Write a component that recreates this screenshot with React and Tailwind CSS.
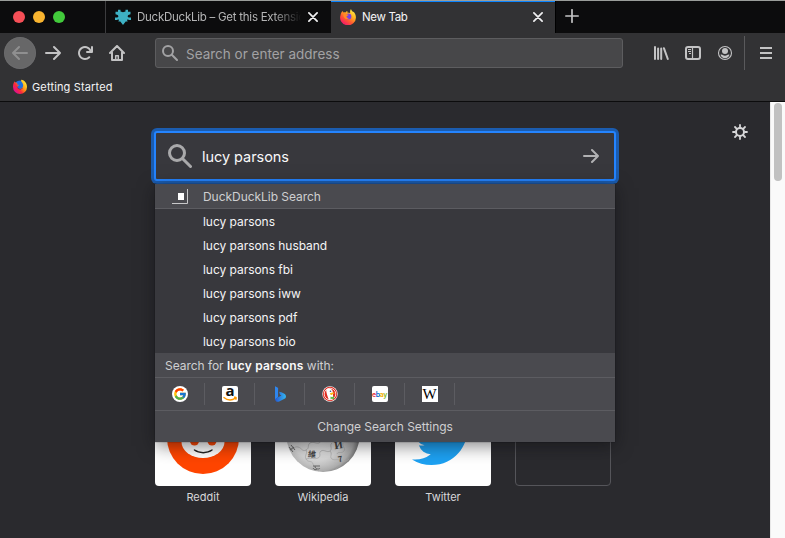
import React from "react";
import { FcGoogle } from "react-icons/fc";

const suggestions = [
  "lucy parsons",
  "lucy parsons husband",
  "lucy parsons fbi",
  "lucy parsons iww",
  "lucy parsons pdf",
  "lucy parsons bio",
];

function Firefox({ id, className }) {
  return (
    <svg viewBox="0 0 16 16" className={className}>
      <defs>
        <linearGradient id={id} x1="0.85" y1="0.05" x2="0.2" y2="0.95">
          <stop offset="0" stopColor="#fff04a" />
          <stop offset="0.35" stopColor="#ffb01f" />
          <stop offset="0.65" stopColor="#ff5a30" />
          <stop offset="1" stopColor="#f5156c" />
        </linearGradient>
      </defs>
      <path
        fill={`url(#${id})`}
        d="M1.5 3.2c.4-.3.7-.9.8-1.3.6.4 1 1 1.2 1.5.7-.2 1.3-.2 1.9 0C6 2.700 6.800 2 7.500 2c-.3.6-.3 1 .1 1.500 1.200.2 2 .4 2.600.6C9.900 2.500 10 1 11 0c.3 1.500 1.400 2.200 2.300 3.200.1-.2.1-.5 0-.8C15 4 15.900 6.200 15.900 8.300A7.900 7.700 0 1 1 .5 6.200c.100-1.100.4-2.200 1-3z"
      />
      <circle cx="8.500" cy="7.400" r="2.900" fill="#7543e3" />
      <path d="M3.300 4.500c1.400-.6 2.700-.1 3.300.8.600.3 1.500.2 2 .5-.4.900-1.600 1-2 1.500-.2 1.300.9 1.900 2.300 1.400-1 1.900-4 1.800-4.900-.4C3.200 7.600 3.600 6 3.300 4.500z" fill="#ff8a27" />
    </svg>
  );
}

function FirefoxClassic({ className }) {
  return (
    <svg viewBox="0 0 16 16" className={className}>
      <defs>
        <linearGradient id="classic" x1="0.9" y1="0.1" x2="0.1" y2="0.75">
          <stop offset="0" stopColor="#fff13d" />
          <stop offset="0.4" stopColor="#ff9a16" />
          <stop offset="0.7" stopColor="#fb2b3a" />
          <stop offset="1" stopColor="#e0108d" />
        </linearGradient>
      </defs>
      <circle cx="8" cy="7.500" r="6" fill="#1d6fe0" />
      <path fill="url(#classic)" d="M1.700 4c.3-.8.6-1.300 1.100-1.700 0 .5.100.9.400 1.200.8-.2 1.600 0 2.200.4-.5.600-.5 1.200-.1 1.700l1.700.5c-.2.800-1.200 1-1.500 1.500-.2 2.400 4.600 3 5.500 0 .5-1.800-.1-3.200-1.300-4.600C9.100 2.300 8.900 1.500 9.300.7c3.400.4 5.700 3.600 5.700 7.200a7 7.200 0 1 1-14 0C.9 6.300 1.200 5.100 1.700 4z" />
      <path d="M4.700 7c1 3.200 4.600 3.800 6.300 1.600-.4 2-5 3.600-6.300-1.600z" fill="#26268c" />
    </svg>
  );
}

function LibraryLogo() {
  return (
    <svg viewBox="0 0 16 16" className="size-4 shrink-0" fill="#3eb1c4">
      <path d="M3 .8h2.500v1.700L8 3.300l2.500-.8V.8H13v2h2.500v2.500L13.300 6l-.8 1.200 1 1.300H16v2.500h-2.300l-.7-.8-1 .8.7 1.500h-2L8 15.900 5.300 12.500h-2L4 11l-1-.8-.7.8H0V8.500h2.500l1-1.300L2.700 6 .5 5.300V2.800H3z" />
    </svg>
  );
}

function CloseIcon() {
  return (
    <svg viewBox="0 0 10 10" className="size-[10px] shrink-0" stroke="#f0f0f1" strokeWidth="1.700" strokeLinecap="round">
      <path d="M.9.9l8.200 8.200M9.100.9L.9 9.100" />
    </svg>
  );
}

function Arrow({ className }) {
  return (
    <svg viewBox="0 0 16 16" className={className} fill="none" stroke="currentColor" strokeWidth="2" strokeLinecap="round" strokeLinejoin="round">
      <path d="M1 8h14M9 2l6 6-6 6" />
    </svg>
  );
}

function SearchIcon({ className }) {
  return (
    <svg viewBox="0 0 16 16" className={className} fill="none" stroke="currentColor" strokeWidth="2" strokeLinecap="round">
      <circle cx="6" cy="6" r="5" />
      <path d="M9.800 9.800L15 15" />
    </svg>
  );
}

function TabBar() {
  return (
    <div className="flex h-8 bg-[#0c0c0d]">
      <div className="flex w-[105px] items-center gap-2 pl-[13px]">
        <span className="size-3 rounded-full bg-[#f64f57]" />
        <span className="size-3 rounded-full bg-[#f9b42f]" />
        <span className="size-3 rounded-full bg-[#42ca3b]" />
      </div>
      <div className="flex w-[226px] items-center border-l border-[#3c3c3e] pr-[13px] pl-[9px] text-[#b5b5b6]">
        <LibraryLogo />
        <span className="ml-[6px] w-[166px] overflow-hidden pt-px text-[11.5px] tracking-[-0.250px] whitespace-nowrap [mask-image:linear-gradient(to_right,black_82%,transparent_99%)]">
          DuckDuckLib – Get this Extension
        </span>
        <span className="ml-auto flex"><CloseIcon /></span>
      </div>
      <div className="flex w-[224px] items-center border-t border-[#0a84ff] bg-[#323234] pr-[12px] pl-[9px] text-[#f5f5f6]">
        <Firefox id="tabfox" className="mb-px size-4" />
        <span className="ml-[6px] text-[11.5px] tracking-[-0.350px]">New Tab</span>
        <span className="mb-px ml-auto flex"><CloseIcon /></span>
      </div>
      <div className="flex items-center border-l border-black pb-[2px] pl-[9px]">
        <svg viewBox="0 0 14 14" className="size-[14px]" stroke="#c4c4c5" strokeWidth="1.700" strokeLinecap="round">
          <path d="M7 .8v12.400M.8 7h12.400" />
        </svg>
      </div>
    </div>
  );
}

function Toolbar() {
  return (
    <div className="flex h-10 items-center text-[#c3c3c4]">
      <div className="ml-1 flex size-8 items-center justify-center rounded-full bg-[#676768] text-[#8f8f90] ring-1 ring-[#77777850] ring-inset">
        <Arrow className="size-4 rotate-180" />
      </div>
      <Arrow className="ml-[9px] size-4" />
      <svg viewBox="0 0 16 16" className="ml-4 size-4" fill="currentColor">
        <path d="M15 1a1 1 0 0 0-1 1v2.418A6.995 6.995 0 1 0 8 15a6.954 6.954 0 0 0 4.950-2.050 1 1 0 0 0-1.414-1.414A5.019 5.019 0 1 1 12.549 6H10a1 1 0 0 0 0 2h5a1 1 0 0 0 1-1V2a1 1 0 0 0-1-1z" />
      </svg>
      <svg viewBox="0 0 16 16" className="ml-4 size-4" fill="none" stroke="currentColor" strokeWidth="2" strokeLinecap="round" strokeLinejoin="round">
        <path d="M1 8l7-7 7 7M3 7.500V15h10V7.500" />
        <path d="M6.700 15v-4.300h2.600V15" strokeWidth="1.500" />
      </svg>
      <div className="ml-[30px] flex h-[30px] w-[468px] items-center rounded-[3px] border border-[#5d5d5f] bg-[#474749] pl-[6px] text-[#a2a2a4]">
        <SearchIcon className="size-4" />
        <span className="ml-[8px] pt-[2px] text-[13.500px]">Search or enter address</span>
      </div>
      <svg viewBox="0 0 16 16" className="ml-[30px] size-4" fill="none" stroke="currentColor" strokeWidth="2" strokeLinecap="round">
        <path d="M2 2v12M5.100 3.500V14M8.200 3.500V14M10.900 3.200L14.800 14" />
      </svg>
      <svg viewBox="0 0 16 16" className="ml-4 size-4" fill="none" stroke="currentColor">
        <rect x="1" y="2" width="14" height="12" rx="2" strokeWidth="2" />
        <path d="M7.500 2v12" strokeWidth="1.200" />
        <path d="M3 4.500h3M3 6.500h3M4 8.500h2" strokeWidth="1" />
      </svg>
      <svg viewBox="0 0 16 16" className="ml-4 size-4">
        <circle cx="8" cy="8" r="6.500" fill="none" stroke="currentColor" strokeWidth="1.100" />
        <circle cx="8" cy="6.100" r="3" fill="currentColor" />
        <path d="M3.500 9.800c1-.4 1.700-.2 2.300.3 1.300.8 3.100.8 4.400 0 .6-.5 1.300-.7 2.300-.3-.7 2.100-2.300 3.400-4.500 3.400S4.200 11.900 3.500 9.800z" fill="currentColor" />
      </svg>
      <div className="ml-[11px] h-[34px] w-px bg-[#5a5a5c]" />
      <div className="ml-[15px] flex flex-col gap-[3px]">
        <span className="h-[2px] w-3 bg-current" />
        <span className="h-[2px] w-3 bg-current" />
        <span className="h-[2px] w-3 bg-current" />
      </div>
    </div>
  );
}

function EngineCell({ children }) {
  return (
    <div className="flex h-[22px] w-[50px] items-center justify-center border-r border-[#5c5c61]">
      {children}
    </div>
  );
}

function Engines() {
  return (
    <div className="flex h-8 items-center">
      <EngineCell>
        <span className="flex size-4 items-center justify-center rounded-full bg-white">
          <FcGoogle className="size-[14px]" />
        </span>
      </EngineCell>
      <EngineCell>
        <svg viewBox="0 0 16 16" className="size-4 overflow-visible">
          <rect width="16" height="16" rx="2" fill="#fff" />
          <text x="8" y="10" textAnchor="middle" fontSize="15" fontWeight="700" fontFamily="Open Sans, sans-serif" fill="#111">a</text>
          <path d="M1.500 11.200c4 3.400 8.500 3.200 12 1M12 11.300c2.200-.5 2.700.2 1.700 2.500" fill="none" stroke="#ff9900" strokeWidth="1.400" />
        </svg>
      </EngineCell>
      <EngineCell>
        <svg viewBox="0 0 16 16" className="size-4">
          <defs>
            <linearGradient id="bing" x1="0" y1="0" x2="1" y2="0">
              <stop offset="0" stopColor="#2356d5" />
              <stop offset="1" stopColor="#35b7f0" />
            </linearGradient>
          </defs>
          <path d="M3 .2l2.500 1.200c.4.2.6.5.6 1V11L3 14z" fill="#2e86ee" />
          <path d="M3 13l3.100-1.800 3.300-1.700-1.400-.7-1-3c3 .7 6.500 1.800 6.900 4.100.2 1.400-.4 2.200-1.400 2.900L7.200 15.600C5 16.500 3 15 3 13z" fill="url(#bing)" />
        </svg>
      </EngineCell>
      <EngineCell>
        <svg viewBox="0 0 16 16" className="size-4">
          <circle cx="8" cy="8" r="7.700" fill="#fff" />
          <circle cx="8" cy="8" r="7.200" fill="#de2b20" />
          <circle cx="8" cy="8" r="5.800" fill="none" stroke="#fff" strokeWidth="0.800" />
          <path d="M4.300 3.500c1.500-1.600 4.500-1.200 5.800.5.700 1 .9 2.600.9 4l.2 5-4.200.9C5.800 11 3.800 6 4.300 3.500z" fill="#fff" />
          <path d="M8 7.300c1.500-.9 4-.9 4.800-.5-.5 1.100-2.400 1.200-2.600 2-.8.500-2.500 0-2.200-1.500z" fill="#fdb913" />
          <path d="M8.500 10.500l1.400.6 2.300-.6v3l-2.300-.7-1.400.5z" fill="#65bc46" />
          <circle cx="8.500" cy="5.300" r=".8" fill="#2d4f8e" />
        </svg>
      </EngineCell>
      <EngineCell>
        <span className="flex size-4 items-center justify-center rounded-[2px] bg-white text-[7px] leading-none font-semibold tracking-[-0.400px]">
          <span className="text-[#e53238]">e</span>
          <span className="text-[#0064d2]">b</span>
          <span className="text-[#f5af02]">a</span>
          <span className="text-[#86b817]">y</span>
        </span>
      </EngineCell>
      <EngineCell>
        <span className="flex size-4 items-center justify-center bg-white font-['Liberation_Serif',serif] text-[15px] leading-none text-black">
          W
        </span>
      </EngineCell>
    </div>
  );
}

function Dropdown() {
  return (
    <div className="absolute top-[51px] -left-px z-10 w-[460px] bg-[#38383d] text-[12px] tracking-[-0.040px] text-[#f5f5f6] shadow-[0_4px_16px_rgba(12,12,13,0.5),0_0_1px_rgba(0,0,0,0.6)]">
      <div className="flex h-[25px] items-center border-b border-[#5c5c61] bg-[#4a4a4f] pl-4 text-[#cfcfd1]">
        <svg viewBox="0 0 18 16" className="h-4 w-[18px]">
          <path d="M1 15.500h15.500V1" fill="none" stroke="#c8c8ca" />
          <rect x="7" y="5" width="6" height="7" fill="#fff" />
        </svg>
        <span className="ml-[14px] pt-px">DuckDuckLib Search</span>
      </div>
      <ul>
        {suggestions.map((s) => (
          <li key={s} className="flex h-6 items-center pt-[2px] pl-12">{s}</li>
        ))}
      </ul>
      <div className="bg-[#4a4a4f] text-[#cfcfd1]">
        <div className="h-[25px] border-b border-[#5c5c61] pl-[10px] leading-[25px]">
          Search for <b className="font-semibold tracking-[0.180px] text-[#f9f9fa]">lucy parsons</b> with:
        </div>
        <Engines />
        <div className="h-8 border-t border-[#5c5c61] text-center leading-[32px]">Change Search Settings</div>
      </div>
    </div>
  );
}

function Tile({ label, children }) {
  return (
    <div className="w-24 text-center">
      <div className={children ? "h-24 overflow-hidden rounded bg-white" : "h-24 rounded border border-[#55555a]"}>
        {children}
      </div>
      <div className="mt-[3px] text-[11px] leading-4 text-[#d7d7d9]">{label}</div>
    </div>
  );
}

function RedditArt() {
  return (
    <svg viewBox="0 0 96 96" className="size-24">
      <circle cx="48" cy="48" r="36" fill="#ff4500" />
      <ellipse cx="48" cy="52" rx="21.500" ry="16" fill="#fff" />
      <circle cx="39.500" cy="51" r="4.500" fill="#ff4500" />
      <circle cx="57" cy="51" r="4.500" fill="#ff4500" />
      <path d="M39.500 60c4.500 3.500 13 3.500 17.500 0" fill="none" stroke="#222" strokeWidth="1.500" strokeLinecap="round" />
    </svg>
  );
}

function WikipediaArt() {
  return (
    <svg viewBox="0 0 96 96" className="size-24">
      <defs>
        <radialGradient id="globe" cx="0.42" cy="0.48" r="0.6">
          <stop offset="0" stopColor="#f0f0f0" />
          <stop offset="0.6" stopColor="#d6d6d6" />
          <stop offset="0.85" stopColor="#acacac" />
          <stop offset="1" stopColor="#666" />
        </radialGradient>
      </defs>
      <circle cx="48" cy="45.500" r="36.500" fill="url(#globe)" />
      <path
        fill="none"
        stroke="#a8a8a8"
        strokeWidth="0.700"
        d="M15 60c4 0 4-4 8-3s4 5 8 3 1-5 4-7 6 1 9 0 1-4 4-5M31 60c2 4-2 5 0 9s6 1 7 5 3 6 6 7M31 69c5-2 8 1 12-1s0-5 3-7 6 2 9 0-1-6 2-8M55 61c3 3-1 6 2 8s6-1 8 2-1 6-4 8M65 73c3-2 6-1 9-4M68 53c-1 4 3 5 1 8s-6 0-7 3"
      />
      <g fill="#444" fontFamily="Noto Sans CJK SC, sans-serif" fontWeight="bold">
        <text x="33" y="67" fontSize="8" transform="rotate(5 36 64)">維</text>
        <text x="59" y="59" fontSize="11" fontFamily="Liberation Serif, serif" transform="rotate(-8 62 54)">И</text>
        <text x="63" y="72" fontSize="8" transform="rotate(-12 65 70)">7</text>
      </g>
      <path d="M14 57l4 5M16 55l4 5M15 60l4-3M38 76h7M40 76c0 3 4 4 5 2M38 78c1 2 3 2 4 1" fill="none" stroke="#666" strokeWidth="1" />
    </svg>
  );
}

function TwitterArt() {
  return (
    <svg viewBox="0 0 96 96" className="size-24">
      <path
        transform="translate(17 19) scale(2.580)"
        fill="#1da1f2"
        d="M23.953 4.570a10 10 0 01-2.825.775 4.958 4.958 0 002.163-2.723c-.951.555-2.005.959-3.127 1.184a4.920 4.920 0 00-8.384 4.482C7.690 8.095 4.067 6.130 1.640 3.162a4.822 4.822 0 00-.666 2.475c0 1.710.870 3.213 2.188 4.096a4.904 4.904 0 01-2.228-.616v.060a4.923 4.923 0 003.946 4.827 4.996 4.996 0 01-2.212.085 4.936 4.936 0 004.604 3.417 9.867 9.867 0 01-6.102 2.105c-.390 0-.779-.023-1.170-.067a13.995 13.995 0 007.557 2.209c9.053 0 13.998-7.496 13.998-13.985 0-.210 0-.420-.015-.630A9.935 9.935 0 0024 4.590z"
      />
    </svg>
  );
}

function GearIcon() {
  return (
    <svg viewBox="0 0 16 16" className="ml-[116px] size-4" fill="none" stroke="#d7d7d9" strokeWidth="2">
      <circle cx="8" cy="8" r="4" />
      <path strokeWidth="1.800" strokeLinecap="round" d="M8 1v2M8 13v2M1 8h2M13 8h2M3 3l1.600 1.600M11.400 11.400L13 13M13 3l-1.600 1.600M4.600 11.400L3 13" />
    </svg>
  );
}

export default function App() {
  return (
    <div className="flex h-screen w-full flex-col overflow-hidden bg-[#323234] font-['Inter',sans-serif] antialiased">
      <div className="h-px shrink-0 bg-[#9a9d9a]" />
      <TabBar />
      <Toolbar />
      <div className="flex h-[29px] shrink-0 items-center border-b border-[#0c0c0d] pl-3 text-[11px] text-[#f5f5f6]">
        <FirefoxClassic className="size-4" />
        <span className="ml-1 tracking-[0.150px]">Getting Started</span>
      </div>
      <div className="flex min-h-0 flex-1 bg-[#2a2a2e]">
        <main className="flex-1 pt-[22px]">
          <div className="flex items-start pl-[154px]">
            <div className="relative mt-[7px] flex h-[50px] w-[462px] items-center rounded-[3px] border-2 border-[#2484ff] bg-[#38383d] pr-[15px] pl-3 shadow-[0_0_0_3px_#1b5caf]">
              <SearchIcon className="size-6 text-[#a9a9ab]" />
              <span className="ml-[10px] pt-[2px] text-[14.500px] tracking-[-0.050px] text-[#f9f9fa]">lucy parsons</span>
              <Arrow className="ml-auto size-4 text-[#b1b1b3]" />
              <Dropdown />
            </div>
            <GearIcon />
          </div>
          <div className="mt-[209px] flex gap-6 pl-[155px]">
            <Tile label="Reddit"><RedditArt /></Tile>
            <Tile label="Wikipedia"><WikipediaArt /></Tile>
            <Tile label="Twitter"><TwitterArt /></Tile>
            <Tile label="" />
          </div>
        </main>
        <div className="w-[15px] border-l border-[#e8e8e8] bg-[#fafafa] pt-px pl-[3px]">
          <div className="h-[78px] w-2 rounded-full bg-[#c1c1c1]" />
        </div>
      </div>
    </div>
  );
}
